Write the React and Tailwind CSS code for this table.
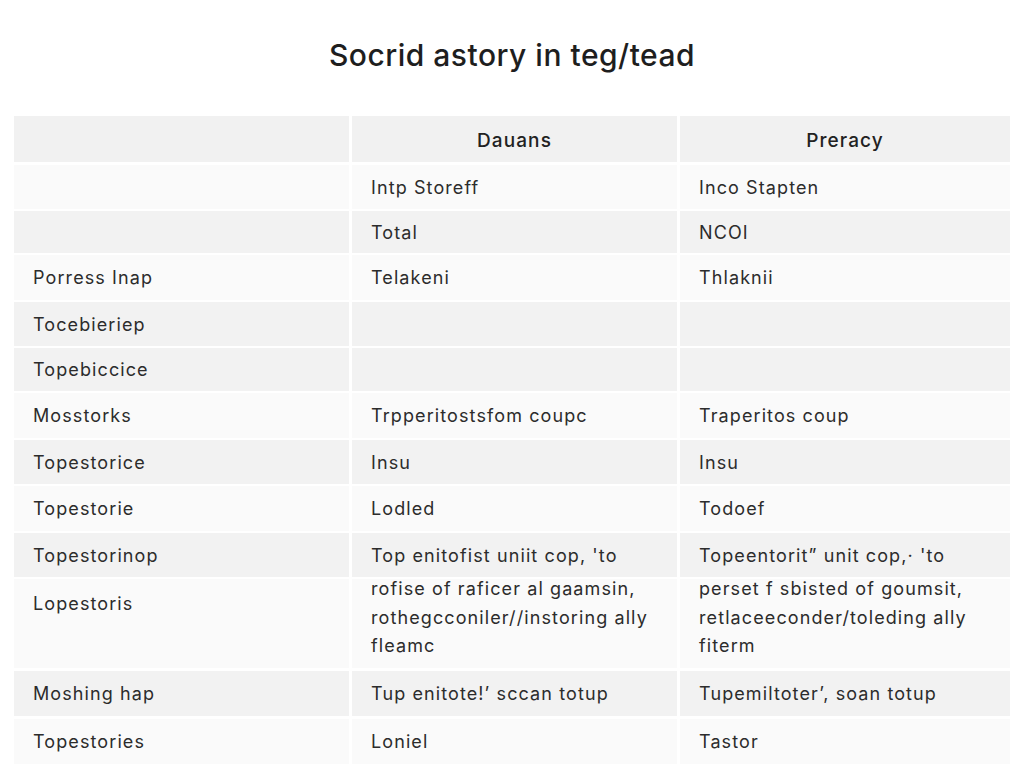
const rows = [
  { a: '', b: ['Intp Storeff'], c: ['Inco Stapten'], h: 'h-[44px]', gray: false },
  { a: '', b: ['Total'], c: ['NCOI'], h: 'h-[42px]', gray: true },
  { a: 'Porress Inap', b: ['Telakeni'], c: ['Thlaknii'], h: 'h-[45px]', gray: false },
  { a: 'Tocebieriep', b: [], c: [], h: 'h-[44px]', gray: true },
  { a: 'Topebiccice', b: [], c: [], h: 'h-[43px]', gray: true },
  { a: 'Mosstorks', b: ['Trpperitostsfom coupc'], c: ['Traperitos coup'], h: 'h-[45px]', gray: false },
  { a: 'Topestorice', b: ['Insu'], c: ['Insu'], h: 'h-[44px]', gray: true },
  { a: 'Topestorie', b: ['Lodled'], c: ['Todoef'], h: 'h-[45px]', gray: false },
  { a: 'Topestorinop', b: ["Top enitofist uniit cop, 'to"], c: ["Topeentorit\u201d unit cop,\u00b7 'to"], h: 'h-[44px]', gray: true },
  {
    a: 'Lopestoris',
    b: ['rofise of raficer al gaamsin,', 'rothegcconiler//instoring ally', 'fleamc'],
    c: ['perset f sbisted of goumsit,', 'retlaceeconder/toleding ally', 'fiterm'],
    h: 'h-[89px]',
    gray: false,
  },
  { a: 'Moshing hap', b: ['Tup enitote!\u2019 sccan totup'], c: ['Tupemiltoter\u2019, soan totup'], h: 'h-[45px]', gray: true, gap: 'mt-[1px]' },
  { a: 'Topestories', b: ['Loniel'], c: ['Tastor'], h: 'h-[45px]', gray: false, gap: 'mt-[1px]' },
];

function Cell({ lines, multi }) {
  if (multi) {
    return (
      <div className="flex flex-col justify-start px-[19px] -mt-[4px] leading-[28.5px]">
        {lines.map((l, i) => (
          <span key={i} className="whitespace-nowrap">{l}</span>
        ))}
      </div>
    );
  }
  return (
    <div className="flex items-center h-full px-[19px] whitespace-nowrap">{lines[0] || ''}</div>
  );
}

export default function App() {
  return (
    <div className="w-[1024px] h-[768px] bg-white overflow-hidden text-[#2c2c2c] font-['Inter',sans-serif]">
      <h1 className="pt-[36px] h-[116px] text-center text-[30px] font-medium tracking-[0.5px] text-[#1e1e1e] leading-[38px]">
        Socrid astory in teg/tead
      </h1>

      <div className="ml-[14px] w-[996px] flex flex-col gap-[2px] text-[18px] tracking-[1.1px]">
        <div className="grid grid-cols-[335px_325px_330px] gap-x-[3px] h-[46px] mb-[1px]">
          <div className="bg-[#f1f1f1]"></div>
          <div className="bg-[#f1f1f1] flex items-center justify-center pt-[4px] font-medium text-[19px] text-[#222]">Dauans</div>
          <div className="bg-[#f1f1f1] flex items-center justify-center pt-[4px] font-medium text-[19px] text-[#222]">Preracy</div>
        </div>

        {rows.map((r, i) => {
          const bg = r.gray ? 'bg-[#f2f2f2]' : 'bg-[#fafafa]';
          const multi = r.b.length > 1;
          return (
            <div key={i} className={`grid grid-cols-[335px_325px_330px] gap-x-[3px] ${r.h} ${r.gap || ''}`}>
              <div className={`${bg} flex px-[19px] whitespace-nowrap ${multi ? 'items-start pt-[11px] leading-[28px]' : 'items-center'}`}>{r.a}</div>
              <div className={`${bg} overflow-visible`}>
                <Cell lines={r.b} multi={multi} />
              </div>
              <div className={`${bg} overflow-visible`}>
                <Cell lines={r.c} multi={multi} />
              </div>
            </div>
          );
        })}
      </div>
    </div>
  );
}
